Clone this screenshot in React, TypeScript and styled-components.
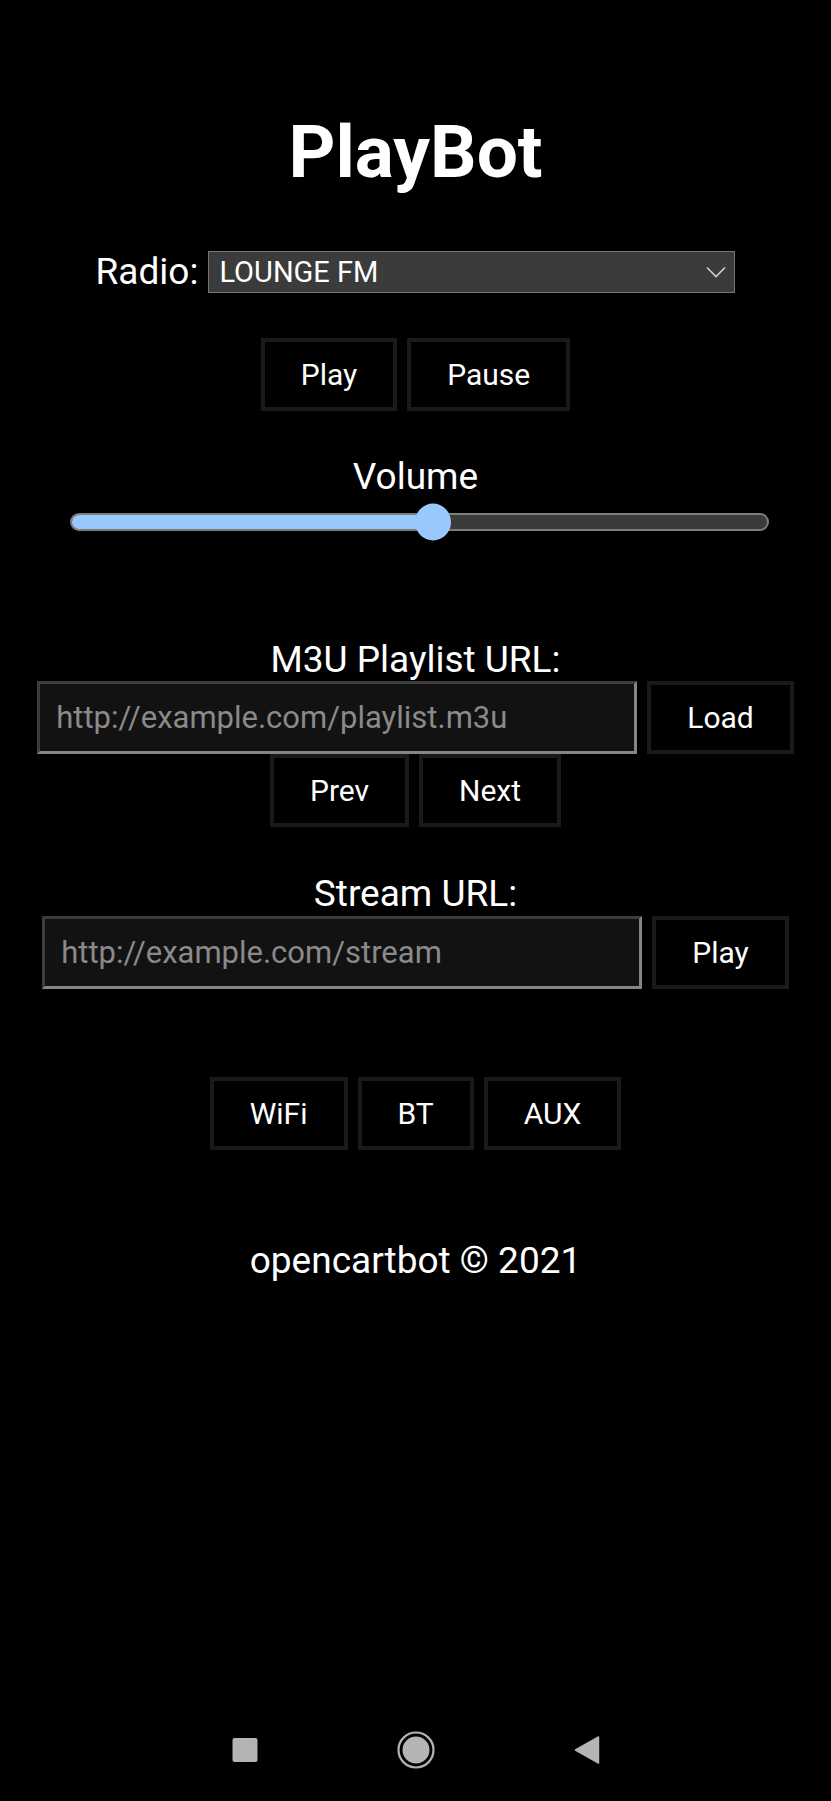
import React, { useState } from 'react';
import styled, { createGlobalStyle } from 'styled-components';

const GlobalStyle = createGlobalStyle`
  html, body {
    margin: 0;
    padding: 0;
    background: #000;
  }
  body {
    font-family: Roboto, "Liberation Sans", sans-serif;
    color: #fff;
  }
  #root {
    min-height: 100vh;
  }
`;

const Page = styled.div`
  min-height: 100vh;
  box-sizing: border-box;
  display: flex;
  flex-direction: column;
  align-items: center;
  background: #000;
  padding-top: 109px;
`;

const Title = styled.h1`
  margin: 0;
  font-size: 73px;
  line-height: 86px;
  font-weight: 700;
  color: #fff;
`;

const Label = styled.div<{ $mt?: number }>`
  margin-top: ${(p) => p.$mt ?? 0}px;
  font-size: 37px;
  line-height: 42px;
  color: #fff;
  text-align: center;
`;

const RadioRow = styled.div`
  margin-top: 56px;
  display: flex;
  align-items: center;
  gap: 10px;
`;

const SelectWrap = styled.div`
  position: relative;
  width: 527px;
  height: 42px;
`;

const Select = styled.select`
  appearance: none;
  -webkit-appearance: none;
  box-sizing: border-box;
  width: 100%;
  height: 100%;
  margin: 0;
  padding: 0 40px 0 10px;
  background: #3b3b3b;
  border: 1px solid #767676;
  border-radius: 0;
  color: #fff;
  font-family: Roboto, "Liberation Sans", sans-serif;
  font-size: 29px;
  outline: none;
`;

const Chevron = styled.svg`
  position: absolute;
  right: 9px;
  top: 50%;
  transform: translateY(-50%);
  pointer-events: none;
`;

const ButtonRow = styled.div<{ $mt?: number }>`
  margin-top: ${(p) => p.$mt ?? 0}px;
  display: flex;
  justify-content: center;
  align-items: stretch;
  gap: 10px;
`;

const Button = styled.button`
  box-sizing: border-box;
  height: 73px;
  margin: 0;
  padding: 0 36px;
  border: 4px solid #1a1a1a;
  border-radius: 0;
  background: #000;
  color: #fff;
  font-family: Roboto, "Liberation Sans", sans-serif;
  font-size: 30px;
  line-height: 1;
  cursor: pointer;
`;

const UrlInput = styled.input`
  box-sizing: border-box;
  width: 600px;
  height: 73px;
  margin: 0;
  padding: 0 12px 0 16px;
  background: #121212;
  border-style: solid;
  border-width: 3px;
  border-color: #3c3c3c #858585 #858585 #3c3c3c;
  border-radius: 0;
  color: #fff;
  font-family: Roboto, "Liberation Sans", sans-serif;
  font-size: 31px;
  outline: none;

  &::placeholder {
    color: #8a8a8a;
  }
`;

const SliderArea = styled.div`
  align-self: stretch;
  margin-top: 5px;
  padding: 0 62px 0 70px;
`;

const SliderTrack = styled.div`
  position: relative;
  height: 37px;
  display: flex;
  align-items: center;
`;

const Rail = styled.div`
  flex: 1;
  box-sizing: border-box;
  height: 18px;
  border: 2px solid #7c7c7c;
  border-radius: 9px;
  background: #3b3b3b;
  overflow: hidden;
  display: flex;
`;

const RailFill = styled.div`
  height: 100%;
  background: #99c8ff;
`;

const Thumb = styled.div`
  position: absolute;
  top: 50%;
  width: 36px;
  height: 37px;
  border-radius: 50%;
  background: #99c8ff;
  transform: translate(-50%, -50%);
`;

const Footer = styled.div`
  margin-top: 90px;
  font-size: 37px;
  line-height: 42px;
  color: #fff;
`;

const NavBar = styled.nav`
  margin-top: auto;
  align-self: stretch;
  height: 102px;
  display: flex;
  justify-content: center;
  align-items: center;
`;

const NavSlot = styled.div`
  width: 171px;
  display: flex;
  justify-content: center;
  align-items: center;
`;

const stations = ['LOUNGE FM', 'ROCK FM', 'JAZZ FM'];

export default function App() {
  const [volume] = useState(52);
  const [station, setStation] = useState(stations[0]);

  return (
    <>
      <GlobalStyle />
      <Page>
        <Title>PlayBot</Title>

        <RadioRow>
          <Label>Radio:</Label>
          <SelectWrap>
            <Select value={station} onChange={(e) => setStation(e.target.value)}>
              {stations.map((s) => (
                <option key={s} value={s}>
                  {s}
                </option>
              ))}
            </Select>
            <Chevron width="20" height="12" viewBox="0 0 20 12">
              <path d="M1 1.5 L10 10.5 L19 1.5" fill="none" stroke="#d0d0d0" strokeWidth="1.6" />
            </Chevron>
          </SelectWrap>
        </RadioRow>

        <ButtonRow $mt={45}>
          <Button>Play</Button>
          <Button>Pause</Button>
        </ButtonRow>

        <Label $mt={45}>Volume</Label>
        <SliderArea>
          <SliderTrack>
            <Rail>
              <RailFill style={{ width: `${volume}%` }} />
            </Rail>
            <Thumb style={{ left: `${volume}%` }} />
          </SliderTrack>
        </SliderArea>

        <Label $mt={99}>M3U Playlist URL:</Label>
        <ButtonRow>
          <UrlInput placeholder="http://example.com/playlist.m3u" />
          <Button>Load</Button>
        </ButtonRow>
        <ButtonRow>
          <Button>Prev</Button>
          <Button>Next</Button>
        </ButtonRow>

        <Label $mt={46}>Stream URL:</Label>
        <ButtonRow $mt={1}>
          <UrlInput placeholder="http://example.com/stream" />
          <Button>Play</Button>
        </ButtonRow>

        <ButtonRow $mt={88}>
          <Button>WiFi</Button>
          <Button>BT</Button>
          <Button>AUX</Button>
        </ButtonRow>

        <Footer>opencartbot © 2021</Footer>

        <NavBar>
          <NavSlot>
            <svg width="26" height="26" viewBox="0 0 26 26">
              <rect x="0.5" y="1" width="25" height="24" rx="2" fill="#b4b4b4" />
            </svg>
          </NavSlot>
          <NavSlot>
            <svg width="38" height="38" viewBox="0 0 38 38">
              <circle cx="19" cy="19" r="17.5" fill="none" stroke="#b4b4b4" strokeWidth="2.2" />
              <circle cx="19" cy="19" r="13.5" fill="#b4b4b4" />
            </svg>
          </NavSlot>
          <NavSlot>
            <svg width="26" height="28" viewBox="0 0 26 28">
              <path d="M1.5 14 L24.5 1 L24.5 27 Z" fill="#b4b4b4" stroke="#b4b4b4" strokeWidth="1.5" strokeLinejoin="round" />
            </svg>
          </NavSlot>
        </NavBar>
      </Page>
    </>
  );
}
